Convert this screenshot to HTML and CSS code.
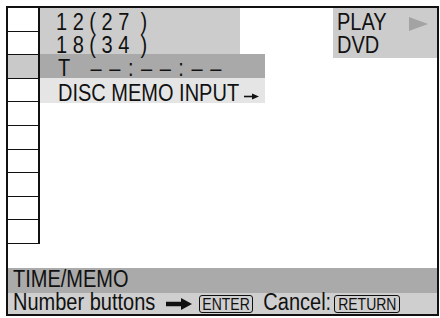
FILE: index.html
```html
<!DOCTYPE html>
<html>
<head>
<meta charset="utf-8">
<link rel="stylesheet" href="styles.css">
</head>
<body>
<div class="frame">
  <div class="main">
    <div class="cells">
      <div class="cell"></div>
      <div class="cell"></div>
      <div class="cell sel"></div>
      <div class="cell"></div>
      <div class="cell"></div>
      <div class="cell"></div>
      <div class="cell"></div>
      <div class="cell"></div>
      <div class="cell"></div>
      <div class="cell"></div>
    </div>
    <div class="content">
      <div class="top">
        <div class="counts">
          <div class="line"><span class="t">1 2 ( 2 7  )</span></div>
          <div class="line"><span class="t">1 8 ( 3 4  )</span></div>
        </div>
        <div class="status">
          <div class="line play"><span class="t">PLAY</span><span class="tri"></span></div>
          <div class="line"><span class="t">DVD</span></div>
        </div>
      </div>
      <div class="row time"><span class="t dashes">T   – – : – – : – –</span></div>
      <div class="row memo"><span class="t">DISC MEMO INPUT </span><svg class="arr" width="15" height="7" viewBox="0 0 15 7"><path d="M0 3.5 H9" stroke="#111" stroke-width="1.6"/><path d="M8 0.5 L15 3.5 L8 6.5 Z" fill="#111"/></svg></div>
    </div>
  </div>
  <div class="bar title"><span class="t">TIME/MEMO</span></div>
  <div class="bar help"><span class="t">Number buttons </span><svg class="bigarr" width="26" height="12" viewBox="0 0 26 12"><path d="M0 3.7 H15 V0 L26 6 L15 12 V8.3 H0 Z" fill="#111"/></svg><span class="key"><span class="kt">ENTER</span></span><span class="t cancel">Cancel:</span><span class="key ret"><span class="kt">RETURN</span></span></div>
</div>
</body>
</html>
```

FILE: styles.css
```css
* { box-sizing: border-box; }
body {
  margin: 0;
  background: #fff;
  font-family: "Liberation Sans", Arial, sans-serif;
  color: #111;
}
.t {
  display: inline-block;
  white-space: pre;
  transform: scaleY(1.16);
  transform-origin: 0 80%;
}
.frame {
  margin: 6px 0 0 6px;
  width: 433px;
  height: 310px;
  border: 2px solid #111;
  display: flex;
  flex-direction: column;
}
.main {
  height: 260px;
  display: flex;
}
.cells {
  width: 32px;
  display: flex;
  flex-direction: column;
  align-self: flex-start;
}
.cell {
  height: 23.6px;
  border-right: 2px solid #111;
  border-bottom: 1.6px solid #111;
}
.cell.sel { background: #c9c9c9; }
.content {
  flex: 1;
  display: flex;
  flex-direction: column;
  font-size: 20px;
  line-height: 23px;
}
.top {
  height: 46px;
  display: flex;
  align-items: flex-start;
}
.counts {
  width: 200px;
  height: 46px;
  background: #cccccc;
  padding: 3.6px 0 0 16px;
}
.status {
  margin-left: auto;
  width: 104px;
  height: 50px;
  background: #cccccc;
  padding: 3.6px 0 0 4px;
  position: relative;
  z-index: 1;
}
.line { height: 23px; }
.play { display: flex; align-items: flex-start; }
.tri {
  margin: 5px 0 0 22px;
  width: 0;
  height: 0;
  border-left: 19px solid #a3a3a3;
  border-top: 7px solid transparent;
  border-bottom: 7px solid transparent;
}
.row {
  width: 225px;
  padding-left: 18px;
  line-height: 24px;
}
.time {
  height: 24px;
  background: #a9a9a9;
  padding-top: 3.4px;
}
.dashes { letter-spacing: 1px; }
.memo {
  height: 25px;
  background: #e5e5e5;
  padding-top: 4.4px;
  display: flex;
  align-items: flex-start;
}
.arr { margin-top: 11px; }
.bar {
  padding-left: 5px;
  font-size: 20px;
  white-space: nowrap;
}
.title {
  height: 25px;
  line-height: 25px;
  background: #aaaaaa;
}
.help {
  height: 21px;
  line-height: 21px;
  background: #cfcfcf;
  display: flex;
  align-items: center;
}
.bigarr { margin: 0 7px 0 5px; }
.key {
  display: inline-flex;
  align-items: center;
  justify-content: center;
  height: 18px;
  font-size: 14px;
  border: 1.5px solid #111;
  border-radius: 3px;
  padding: 0 2.5px;
  margin-top: 1px;
}
.kt {
  display: inline-block;
  line-height: 15px;
  transform: scaleY(1.15);
  transform-origin: 50% 55%;
}
.cancel { margin: 0 3px 0 10px; }
.ret { padding: 0 3px; }
```
